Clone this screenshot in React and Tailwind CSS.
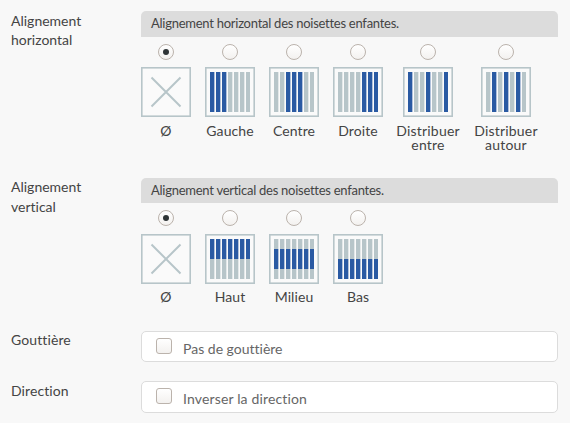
const BLUE = '#2a5aa3';
const GREY = '#b7c5c9';
const COLUMNS = [0, 1, 2, 3, 4, 5, 6];

function Frame({ children }) {
  return (
    <svg width="50" height="50" viewBox="0 0 50 50" className="block shrink-0">
      <rect x="0.8" y="0.8" width="48.4" height="48.4" fill="#fafafa" stroke={GREY} strokeWidth="1.6" />
      {children}
    </svg>
  );
}

function NoneIcon() {
  return (
    <Frame>
      <path d="M10.5 10.5L39.5 39.5M39.5 10.5L10.5 39.5" stroke={GREY} strokeWidth="2" />
    </Frame>
  );
}

// Seven bars; "on" lists the highlighted columns.
function BarsIcon({ on }) {
  return (
    <Frame>
      {COLUMNS.map((i) => (
        <rect key={i} x={5 + i * 6} y="5" width={i === 6 ? 4 : 4.35} height="40" fill={on.includes(i) ? BLUE : GREY} />
      ))}
    </Frame>
  );
}

// Seven bars with a highlighted 20px band starting at "top".
function BandIcon({ top }) {
  return (
    <Frame>
      {COLUMNS.map((i) => {
        const w = i === 6 ? 4 : 4.35;
        const x = 5 + i * 6;
        return (
          <g key={i}>
            {top > 5 && <rect x={x} y="5" width={w} height={top - 5} fill={GREY} />}
            <rect x={x} y={top} width={w} height="20" fill={BLUE} />
            {top < 25 && <rect x={x} y={top + 20} width={w} height={25 - top} fill={GREY} />}
          </g>
        );
      })}
    </Frame>
  );
}

function Radio({ checked }) {
  return (
    <span className="flex h-4 w-4 shrink-0 items-center justify-center rounded-full border border-[#bbb3ac] bg-linear-to-b from-white to-[#f3f1ef]">
      {checked && <span className="h-1.5 w-1.5 rounded-full bg-[#2e3436]" />}
    </span>
  );
}

function Option({ checked, icon, lines, width = 'w-[50px]', spacing = 'mt-[7px]' }) {
  return (
    <label className={`flex shrink-0 flex-col items-center ${width}`}>
      <Radio checked={checked} />
      <span className={spacing}>{icon}</span>
      <span className={`flex flex-col items-center text-sm leading-[14px] whitespace-nowrap ${lines.length > 1 ? 'tracking-[0.2px]' : 'tracking-[0.08px]'} ${spacing === 'mt-2' ? 'mt-1.5' : 'mt-[7px]'}`}>
        {lines.map((l) => (
          <span key={l}>{l}</span>
        ))}
      </span>
    </label>
  );
}

function Row({ label, className, labelClass, children }) {
  return (
    <div className={`flex ${className}`}>
      <div className={`w-[130px] shrink-0 text-sm ${labelClass}`}>{label}</div>
      <div className="w-[417px]">{children}</div>
    </div>
  );
}

function Banner({ className, children }) {
  return <div className={`rounded-t-[5px] bg-[#dcdcdc] px-2.5 text-[13px] tracking-[-0.26px] ${className}`}>{children}</div>;
}

function CheckBox({ className, children }) {
  return (
    <label className={`flex rounded-[5px] border border-[#dcdcdc] bg-white pl-3.5 text-sm text-[#666] ${className}`}>
      <span className="mt-1.5 h-4 w-4 rounded-[3px] border border-[#bbb3ac] bg-linear-to-b from-white to-[#f3f1ef]" />
      <span className="mt-[7px] ml-[11px] leading-5">{children}</span>
    </label>
  );
}

export default function App() {
  return (
    <div className="h-[423px] w-[570px] overflow-hidden bg-[#f8f8f8] pt-[11px] pl-[11px] font-['Lato',sans-serif] text-[#444] [font-variant-ligatures:none]">
      <Row className="h-[167px]" labelClass="leading-[19px]" label={<>Alignement<br />horizontal</>}>
        <Banner className="h-[26px] leading-[25px]">Alignement horizontal des noisettes enfantes.</Banner>
        <div className="mt-[7px] flex gap-3.5">
          <Option checked icon={<NoneIcon />} lines={['Ø']} />
          <Option icon={<BarsIcon on={[0, 1, 2]} />} lines={['Gauche']} />
          <Option icon={<BarsIcon on={[2, 3, 4]} />} lines={['Centre']} />
          <Option icon={<BarsIcon on={[4, 5, 6]} />} lines={['Droite']} />
          <Option icon={<BarsIcon on={[0, 3, 6]} />} lines={['Distribuer', 'entre']} width="w-[62px]" />
          <Option icon={<BarsIcon on={[1, 3, 5]} />} lines={['Distribuer', 'autour']} width="w-[66px]" />
        </div>
      </Row>
      <Row className="h-[153px]" labelClass="-mt-px leading-5" label={<>Alignement<br />vertical</>}>
        <Banner className="h-[25px] leading-[25px]">Alignement vertical des noisettes enfantes.</Banner>
        <div className="mt-[7px] flex gap-3.5">
          <Option checked icon={<NoneIcon />} lines={['Ø']} spacing="mt-2" />
          <Option icon={<BandIcon top={5} />} lines={['Haut']} spacing="mt-2" />
          <Option icon={<BandIcon top={15} />} lines={['Milieu']} spacing="mt-2" />
          <Option icon={<BandIcon top={25} />} lines={['Bas']} spacing="mt-2" />
        </div>
      </Row>
      <Row className="h-[50px]" labelClass="-mt-px leading-5 tracking-[0.1px]" label="Gouttière">
        <CheckBox className="h-[31px]">Pas de gouttière</CheckBox>
      </Row>
      <Row className="h-[42px]" labelClass="leading-5 tracking-[0.1px]" label="Direction">
        <CheckBox className="h-8 tracking-[0.15px]">Inverser la direction</CheckBox>
      </Row>
    </div>
  );
}
